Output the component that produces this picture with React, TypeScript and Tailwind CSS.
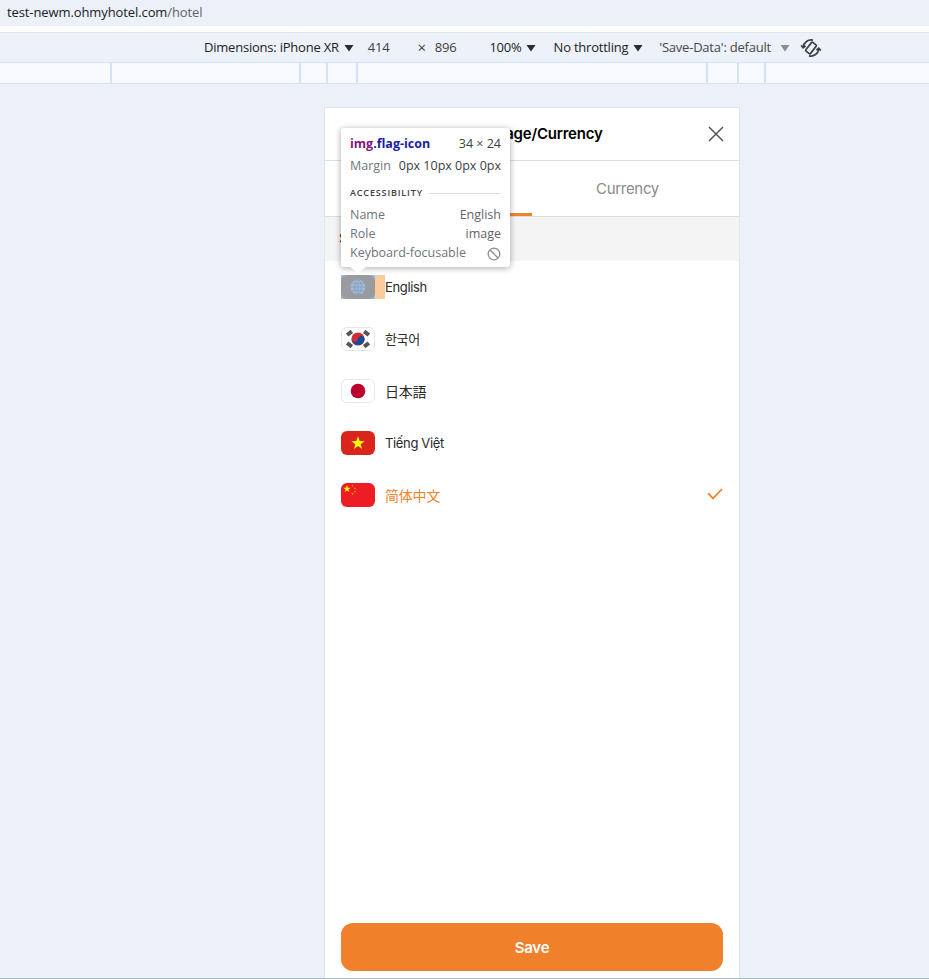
const ui = '"Open Sans","Noto Sans",sans-serif';

function Caret({ gray }: { gray?: boolean }) {
  return (
    <svg width="10" height="8" viewBox="0 0 10 8" className="shrink-0">
      <path d="M0.5 1h9L5 7.5z" fill={gray ? "#8b8d90" : "#2b2d30"} />
    </svg>
  );
}

function RotateIcon() {
  return (
    <svg width="22" height="22" viewBox="0 0 22 22" fill="none" stroke="#3c4043" strokeWidth="1.7">
      <g transform="rotate(38 11 11)">
        <rect x="8" y="5.5" width="6" height="11" rx="1" />
      </g>
      <path d="M3.2 10.2A8 8 0 0 1 13 3.2" />
      <path d="M18.8 11.8A8 8 0 0 1 9 18.8" />
      <path d="M1.2 8.4l2 2.4 2.4-2" />
      <path d="M20.8 13.6l-2-2.4-2.4 2" />
    </svg>
  );
}

function Star({ cx, cy, r, fill }: { cx: number; cy: number; r: number; fill: string }) {
  const pts = Array.from({ length: 10 }, (_, i) => {
    const a = -Math.PI / 2 + (i * Math.PI) / 5;
    const rad = i % 2 === 0 ? r : r * 0.4;
    return `${cx + rad * Math.cos(a)},${cy + rad * Math.sin(a)}`;
  }).join(" ");
  return <polygon points={pts} fill={fill} />;
}

function EnglishFlag() {
  return (
    <div className="flex h-6 w-[44px] shrink-0 bg-[#f9cc9d]">
      <div className="h-6 w-[34px] bg-[#93bfe6]">
        <div className="flex h-6 w-[34px] items-center justify-center rounded-[6px] bg-[#9a9a9f]">
          <svg width="16" height="16" viewBox="0 0 16 16" fill="none">
            <circle cx="8" cy="8" r="7.5" fill="#93c0ea" />
            <g stroke="#9a9a9f" strokeWidth="0.9">
              <ellipse cx="8" cy="8" rx="3.4" ry="7.5" />
              <path d="M8 .5v15M.5 8h15M1.6 4.4h12.8M1.6 11.6h12.8" />
            </g>
          </svg>
        </div>
      </div>
    </div>
  );
}

function KoreaFlag() {
  return (
    <svg width="34" height="24" viewBox="0 0 34 24" className="shrink-0">
      <rect x=".5" y=".5" width="33" height="23" rx="5.5" fill="#fff" stroke="#e6e6e6" />
      <g fill="#555555">
        <rect x="5.5" y="4.2" width="6" height="4" transform="rotate(-38 8.5 6.2)" />
        <rect x="22.5" y="4.2" width="6" height="4" transform="rotate(38 25.5 6.2)" />
        <rect x="5.5" y="15.8" width="6" height="4" transform="rotate(38 8.5 17.8)" />
        <rect x="22.5" y="15.8" width="6" height="4" transform="rotate(-38 25.5 17.8)" />
      </g>
      <circle cx="17" cy="12" r="6.6" fill="#cd2e3a" />
      <path d="M10.5 11a3.2 3.2 0 0 0 6.5 1 3.2 3.2 0 0 1 6.5 1A6.6 6.6 0 0 1 10.5 11z" fill="#0f4a9c" />
    </svg>
  );
}

function JapanFlag() {
  return (
    <svg width="34" height="24" viewBox="0 0 34 24" className="shrink-0">
      <rect x=".5" y=".5" width="33" height="23" rx="5.5" fill="#fff" stroke="#e6e6e6" />
      <circle cx="17" cy="12" r="7.3" fill="#bc002d" />
    </svg>
  );
}

function VietnamFlag() {
  return (
    <svg width="34" height="24" viewBox="0 0 34 24" className="shrink-0">
      <rect width="34" height="24" rx="6" fill="#da251d" />
      <Star cx={17} cy={12.3} r={7} fill="#ffff00" />
    </svg>
  );
}

function ChinaFlag() {
  return (
    <svg width="34" height="24" viewBox="0 0 34 24" className="shrink-0">
      <rect width="34" height="24" rx="6" fill="#ee1c25" />
      <Star cx={6} cy={6} r={3.8} fill="#ffff00" />
      <Star cx={11.5} cy={2.8} r={1.2} fill="#ffcc00" />
      <Star cx={14} cy={5.3} r={1.2} fill="#ffcc00" />
      <Star cx={14} cy={8.6} r={1.2} fill="#ffcc00" />
      <Star cx={11.5} cy={11} r={1.2} fill="#ffcc00" />
    </svg>
  );
}

const cjk = '"Inter","Noto Sans CJK KR","Noto Sans CJK SC",sans-serif';

function Row({ flag, label, active, jp, small }: { flag: React.ReactNode; label: string; active?: boolean; jp?: boolean; small?: boolean }) {
  return (
    <div
      className={`flex h-[52px] items-center px-4 ${active ? "text-[#f28128]" : "text-[#2a2a2a]"}`}
      style={{ fontFamily: jp ? '"Inter","Noto Sans CJK JP",sans-serif' : cjk }}
    >
      {flag}
      <span
        className={`${label === "English" ? "" : "ml-[10px]"} ${small ? "pt-[2px] text-[13px] tracking-[-0.35px]" : "text-[14px] tracking-[-0.2px]"}`}
      >
        {label}
      </span>
      {active && (
        <svg width="16" height="12" viewBox="0 0 16 12" fill="none" className="mb-[3px] ml-auto" stroke="#f28128" strokeWidth="1.8">
          <path d="M1 5.2l5 5.2L15 1" />
        </svg>
      )}
    </div>
  );
}

function Tooltip() {
  return (
    <div
      className="absolute left-[16px] top-[20px] z-10 h-[139px] w-[169px] rounded-[3px] bg-white px-[9px] pt-[8px] text-[12.5px] text-[#5f6368] shadow-[0_1px_6px_rgba(0,0,0,0.35)]"
      style={{ fontFamily: ui }}
    >
      <div className="flex h-[17px] items-center justify-between leading-none">
        <span className="font-bold">
          <span className="text-[#881280]">img</span>
          <span className="text-[#1a1aa6]">.flag-icon</span>
        </span>
        <span className="text-[#3c4043]">34 × 24</span>
      </div>
      <div className="mt-[5px] flex h-[17px] items-center justify-between whitespace-nowrap leading-none">
        <span className="text-[#70757a]">Margin</span>
        <span className="text-[#3c4043]">0px 10px 0px 0px</span>
      </div>
      <div className="mt-[10px] flex h-[16px] items-center gap-[6px] text-[9px] font-semibold tracking-[0.85px] text-[#3c4043]">
        <span>ACCESSIBILITY</span>
        <div className="h-px flex-1 bg-[#dadce0]" />
      </div>
      <div className="mt-[5px] flex h-[19px] items-center justify-between">
        <span className="text-[#70757a]">Name</span>
        <span>English</span>
      </div>
      <div className="flex h-[19px] items-center justify-between">
        <span className="text-[#70757a]">Role</span>
        <span>image</span>
      </div>
      <div className="flex h-[19px] items-center justify-between">
        <span className="text-[#70757a]">Keyboard-focusable</span>
        <svg width="14" height="14" viewBox="0 0 14 14" fill="none" stroke="#8a8d91" strokeWidth="1.3">
          <circle cx="7" cy="7" r="5.8" />
          <path d="M3 3l8 8" />
        </svg>
      </div>
      <div className="absolute left-[9px] top-[139px] h-0 w-0 border-x-[8px] border-t-[6px] border-x-transparent border-t-white" />
    </div>
  );
}

export default function App() {
  const rulerStops = [112, 189, 27, 30, 350, 31, 27];
  return (
    <div className="flex h-[979px] w-[929px] flex-col overflow-hidden border-b border-[#a9bcc0] bg-[#ecf1f9]" style={{ fontFamily: ui }}>
      <div className="flex h-[26px] shrink-0 items-center bg-[#ecf1f9] pl-[7px] text-[13px] tracking-[-0.1px] text-[#202124]">
        test-newm.ohmyhotel.com<span className="text-[#5f6368]">/hotel</span>
      </div>
      <div className="h-[7px] shrink-0 border-b border-[#e3e5e8] bg-white" />
      <div className="flex h-[29px] shrink-0 items-center bg-[#edf2fa] pl-[204px] text-[13px] tracking-[-0.22px] text-[#202124]">
        <span>Dimensions: iPhone XR</span>
        <span className="ml-[5px]"><Caret /></span>
        <span className="ml-[14px] text-[#3c4043]">414</span>
        <span className="ml-[28px] text-[15px] leading-none text-[#3c4043]">×</span>
        <span className="ml-[9px] text-[#3c4043]">896</span>
        <span className="ml-[33px]">100%</span>
        <span className="ml-[4px]"><Caret /></span>
        <span className="ml-[18px]">No throttling</span>
        <span className="ml-[5px]"><Caret /></span>
        <span className="ml-[16px] text-[#44474a]">'Save-Data': default</span>
        <span className="ml-[9px]"><Caret gray /></span>
        <span className="ml-[10px]"><RotateIcon /></span>
      </div>
      <div className="flex h-[22px] shrink-0 border-y border-[#d3e3fd] bg-[#f8faff]">
        {rulerStops.map((w, i) => (
          <div key={i} className="shrink-0 border-r-2 border-[#d3e3fd]" style={{ width: w }} />
        ))}
      </div>
      <div className="flex min-h-0 flex-1 pl-[324px] pt-[23px]">
        <div className="relative flex h-[872px] w-[416px] flex-col border-x border-t border-[#e3e4e6] bg-white" style={{ fontFamily: '"Inter",sans-serif' }}>
          <div className="relative flex h-[53px] shrink-0 items-center justify-center border-b border-[#dedede]">
            <span className="text-[15px] font-semibold tracking-[-0.2px] text-black">Language/Currency</span>
            <svg width="16" height="16" viewBox="0 0 16 16" className="absolute right-[15px] top-[18px]" stroke="#555555" strokeWidth="1.5">
              <path d="M1 1l14 14M15 1L1 15" />
            </svg>
          </div>
          <div className="flex h-[56px] shrink-0 border-b border-[#dedede] px-4 text-[15px] tracking-[-0.3px]">
            <div className="flex flex-1 items-center justify-center border-b-[3px] border-[#f28128] text-[#f28128]">Language</div>
            <div className="flex flex-1 items-center justify-center pt-[2px] text-[#8a8a8a]">Currency</div>
          </div>
          <div className="flex h-[44px] shrink-0 items-center bg-[#f4f4f4] pl-[14px] text-[13px] text-[#222222]">Select</div>
          <div>
            <Row flag={<EnglishFlag />} label="English" small />
            <Row flag={<KoreaFlag />} label="한국어" small />
            <Row flag={<JapanFlag />} label="日本語" jp />
            <Row flag={<VietnamFlag />} label="Tiếng Việt" small />
            <Row flag={<ChinaFlag />} label="简体中文" active />
          </div>
          <div className="mt-auto px-4 pb-[8px]">
            <button className="flex h-12 w-[382px] items-center justify-center rounded-[12px] bg-[#f1802a] pt-[2px] text-[15px] font-semibold tracking-[-0.2px] text-white">Save</button>
          </div>
          <Tooltip />
        </div>
      </div>
    </div>
  );
}
